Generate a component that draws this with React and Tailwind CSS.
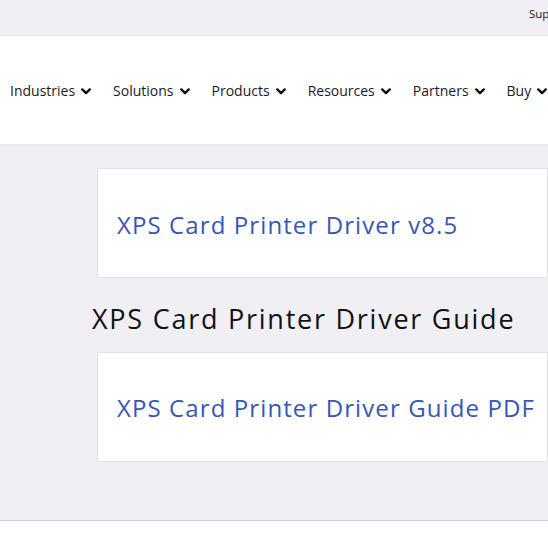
import React from 'react';

const Chevron = () => (
  <svg viewBox="0 0 12 8" className="w-[10px] h-[7px] ml-[6px] mt-[2px]" fill="none">
    <path d="M1.5 1.5 L6 6 L10.5 1.5" stroke="#111" strokeWidth="2.8" strokeLinecap="round" strokeLinejoin="round" />
  </svg>
);

const navItems = ['Industries', 'Solutions', 'Products', 'Resources', 'Partners', 'Buy'];

const App = () => {
  return (
    <div className="w-[548px] h-[548px] overflow-hidden bg-white font-['Open_Sans',sans-serif]">
      {/* utility bar */}
      <div className="h-[36px] bg-[#f0f0f4] border-b border-[#e3e3e8] flex items-center pl-[529px] whitespace-nowrap overflow-hidden">
        <span className="text-[11.5px] text-[#222] mt-[-8px]">Sup</span>
      </div>

      {/* main nav */}
      <nav className="h-[110px] bg-white border-b-[2px] border-[#e8e8ec] flex items-center pl-[10px] whitespace-nowrap">
        <ul className="flex items-center gap-[22px] text-[14px] text-[#1a1a1a]">
          {navItems.map((item) => (
            <li key={item} className="flex items-center">
              {item}
              <Chevron />
            </li>
          ))}
        </ul>
      </nav>

      {/* content */}
      <main className="bg-[#f0f0f4] pt-[22px] pb-[58px] pl-[92px] border-b border-[#cfcfd3]">
        <div className="ml-[5px] h-[110px] bg-white border border-[#e2e2e6] flex items-center pl-[19px] whitespace-nowrap">
          <a className="text-[24px] text-[#3558b6] tracking-[1.1px] mt-[3px]">XPS Card Printer Driver v8.5</a>
        </div>
        <h2 className="text-[27px] font-medium text-[#111] mt-[24px] mb-[16px] leading-[34px] whitespace-nowrap tracking-[1.75px]">
          XPS Card Printer Driver Guide
        </h2>
        <div className="ml-[5px] h-[110px] bg-white border border-[#e2e2e6] flex items-center pl-[19px] whitespace-nowrap">
          <a className="text-[24px] text-[#3558b6] tracking-[1.1px] mt-[2px]">XPS Card Printer Driver Guide PDF</a>
        </div>
      </main>
      <div className="h-[30px] bg-white" />
    </div>
  );
};

export default App;
